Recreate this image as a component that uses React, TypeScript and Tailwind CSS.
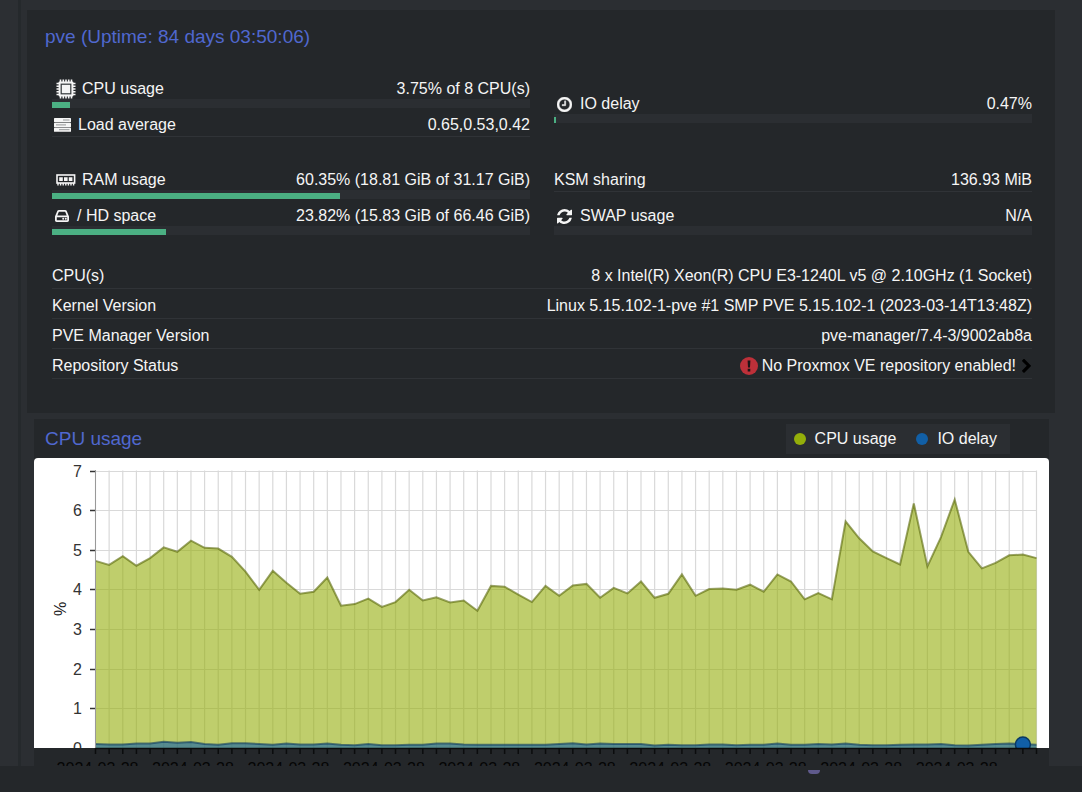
import type { ReactNode } from 'react';

const cpuSeries = [
  4.72, 4.62, 4.84, 4.6, 4.79, 5.06, 4.95, 5.23, 5.05, 5.03, 4.82, 4.45, 3.99, 4.47, 4.17, 3.89, 3.94, 4.3,
  3.59, 3.63, 3.77, 3.56, 3.68, 3.99, 3.72, 3.8, 3.67, 3.72, 3.46, 4.09, 4.07, 3.87, 3.68, 4.09, 3.84, 4.1,
  4.14, 3.79, 4.04, 3.9, 4.2, 3.79, 3.89, 4.38, 3.84, 4.01, 4.02, 3.99, 4.12, 3.94, 4.38, 4.2, 3.75, 3.91,
  3.75, 5.72, 5.29, 4.96, 4.79, 4.63, 6.17, 4.58, 5.32, 6.27, 4.95, 4.53, 4.67, 4.86, 4.88, 4.79,
];

const ioSeries = [
  0.1, 0.09, 0.09, 0.11, 0.11, 0.16, 0.13, 0.15, 0.1, 0.08, 0.12, 0.12, 0.1, 0.08, 0.11, 0.09, 0.09, 0.11,
  0.08, 0.07, 0.1, 0.07, 0.07, 0.08, 0.08, 0.11, 0.11, 0.09, 0.08, 0.08, 0.08, 0.08, 0.08, 0.08, 0.1, 0.12,
  0.09, 0.11, 0.1, 0.1, 0.1, 0.06, 0.08, 0.07, 0.07, 0.09, 0.09, 0.07, 0.08, 0.08, 0.11, 0.08, 0.08, 0.1,
  0.09, 0.11, 0.08, 0.07, 0.07, 0.08, 0.09, 0.09, 0.1, 0.07, 0.06, 0.08, 0.1, 0.11, 0.1, 0.08,
];

const dateLabels = Array.from({ length: 10 }, () => '2024-03-28');

const details = [
  { label: 'CPU(s)', value: '8 x Intel(R) Xeon(R) CPU E3-1240L v5 @ 2.10GHz (1 Socket)' },
  { label: 'Kernel Version', value: 'Linux 5.15.102-1-pve #1 SMP PVE 5.15.102-1 (2023-03-14T13:48Z)' },
  { label: 'PVE Manager Version', value: 'pve-manager/7.4-3/9002ab8a' },
];

function CpuIcon() {
  const pins = [4.5, 7.3, 10, 12.7, 15.5];
  return (
    <svg viewBox="0 0 20 20" className="ml-1 mr-1.5 h-5 w-5" aria-hidden="true">
      <g stroke="#f5f5f5" strokeWidth="1.6">
        {pins.map((p) => (
          <path key={p} d={`M${p} 0.5V19.5M0.5 ${p}H19.5`} />
        ))}
      </g>
      <rect x="2.6" y="2.6" width="14.8" height="14.8" rx="1" fill="#f5f5f5" />
      <rect x="5.2" y="5.2" width="9.6" height="9.6" fill="none" stroke="#33373a" strokeWidth="1.2" />
    </svg>
  );
}

function ServerIcon() {
  return (
    <svg viewBox="0 0 17 14" className="ml-0.5 mr-[7px] h-3.5 w-[17px]" aria-hidden="true">
      {[0, 4.8, 9.6] .map((y) => (
        <rect key={y} x="0" y={y} width="17" height="4.2" rx="0.6" fill="#f5f5f5" />
      ))}
      <path d="M9 2H15.5M2 6.9H12M5 11.7H15.5" stroke="#6b6e70" strokeWidth="0.7" />
    </svg>
  );
}

function RamIcon() {
  return (
    <svg viewBox="0 0 20 12" className="ml-1 mr-1.5 h-3 w-5" aria-hidden="true">
      <rect x="1" y="1" width="17.6" height="8" fill="none" stroke="#f5f5f5" strokeWidth="1.6" />
      <path d="M3.2 3.2h3.6v3.8h-3.6zM8 3.2h3.6v3.8h-3.6zM12.8 3.2h3.6v3.8h-3.6z" fill="#f5f5f5" />
      <path d="M2 9v2.4M4.6 9v2.4M7.2 9v2.4M9.8 9v2.4M12.4 9v2.4M15 9v2.4M17.6 9v2.4" stroke="#f5f5f5" strokeWidth="1.4" />
    </svg>
  );
}

function DiskIcon() {
  return (
    <svg viewBox="0 0 14 12" className="ml-[3px] mr-2 h-3 w-3.5" aria-hidden="true">
      <path d="M0.9 6.6 3 1.5Q3.3 0.9 4 0.9H10Q10.7 0.9 11 1.5L13.1 6.6V10.3Q13.1 11.1 12.3 11.1H1.7Q0.9 11.1 0.9 10.3ZM0.9 6.4H13.1" fill="none" stroke="#f5f5f5" strokeWidth="1.8" />
      <circle cx="8.2" cy="8.8" r="1" fill="#f5f5f5" />
      <circle cx="10.8" cy="8.8" r="1" fill="#f5f5f5" />
    </svg>
  );
}

function ClockIcon() {
  return (
    <svg viewBox="0 128 1536 1536" className="ml-[3px] mr-2 h-[15px] w-[15px]" fill="#f5f5f5" stroke="#f5f5f5" strokeWidth="40" aria-hidden="true">
      <path d="M896 544v448q0 14-9 23t-23 9h-320q-14 0-23-9t-9-23v-64q0-14 9-23t23-9h224v-352q0-14 9-23t23-9h64q14 0 23 9t9 23zm416 352q0-148-73-273t-198-198-273-73-273 73-198 198-73 273 73 273 198 198 273 73 273-73 198-198 73-273zm224 0q0 209-103 385.5t-279.5 279.5-385.5 103-385.5-103-279.5-279.5-103-385.5 103-385.5 279.5-279.5 385.5-103 385.5 103 279.5 279.5 103 385.5z" />
    </svg>
  );
}

function RefreshIcon() {
  return (
    <svg viewBox="128 128 1536 1536" className="ml-[3px] mr-2 h-[15px] w-[15px]" fill="#f5f5f5" aria-hidden="true">
      <path d="M1639 1056q0 5-1 7-64 268-268 434.5t-478 166.5q-146 0-282.5-55t-243.5-157l-129 129q-19 19-45 19t-45-19-19-45v-448q0-26 19-45t45-19h448q26 0 45 19t19 45-19 45l-137 137q71 66 161 102t187 36q134 0 250-65t186-179q11-17 53-117 8-23 30-23h192q13 0 22.5 9.5t9.5 22.5zm25-800v448q0 26-19 45t-45 19h-448q-26 0-45-19t-19-45 19-45l138-138q-148-137-349-137-134 0-250 65t-186 179q-11 17-53 117-8 23-30 23h-199q-13 0-22.5-9.5t-9.5-22.5v-7q65-268 270-434.5t480-166.5q146 0 284 55.5t245 156.5l130-129q19-19 45-19t45 19 19 45z" />
    </svg>
  );
}

function AlertIcon() {
  return (
    <svg viewBox="0 0 18 18" className="mr-1 h-[18px] w-[18px]" aria-hidden="true">
      <circle cx="9" cy="9" r="9" fill="#bd3039" />
      <path d="M7.6 3.4h2.8l-.4 7H8zM7.7 11.8h2.6v2.6H7.7z" fill="#1d1416" />
    </svg>
  );
}

function ChevronIcon() {
  return (
    <svg viewBox="346 64 1036 1574" className="ml-1.5 mr-px h-3.5 w-[9px]" aria-hidden="true">
      <path d="M1363 877l-742 742q-19 19-45 19t-45-19l-166-166q-19-19-19-45t19-45l531-531-531-531q-19-19-19-45t19-45l166-166q19-19 45-19t45 19l742 742q19 19 19 45t-19 45z" fill="#000" />
    </svg>
  );
}

interface UsageRowProps {
  icon?: ReactNode;
  label: string;
  value: string;
  percent?: number;
}

// percent left out means a plain row with a hairline instead of a bar
function UsageRow({ icon, label, value, percent }: UsageRowProps) {
  return (
    <div className="h-9">
      <div className="flex h-5 items-center justify-between">
        <span className="flex items-center">
          {icon}
          {label}
        </span>
        <span>{value}</span>
      </div>
      {percent === undefined ? (
        <div className="mt-px h-px bg-[#303337]" />
      ) : (
        <div className="flex h-[9px] items-end bg-[#2b2e32]">
          <div className="h-1.5 bg-[#4bb083]" style={{ width: `${percent}%` }} />
        </div>
      )}
    </div>
  );
}

const LEFT = 61.5;
const RIGHT = 1002.5;
const BASE = 290;
const UNIT = 39.64;
const STEP = (RIGHT - LEFT) / (cpuSeries.length - 1);

const toLine = (series: number[]) =>
  series.map((v, i) => `${(LEFT + i * STEP).toFixed(1)},${(BASE - v * UNIT).toFixed(1)}`).join(' ');

function UsageChart() {
  const cpu = toLine(cpuSeries);
  const io = toLine(ioSeries);
  return (
    <svg viewBox="0 0 1015 308" className="block w-full overflow-hidden" role="img" aria-label="CPU usage chart">
      <path d="M0 290V4Q0 0 4 0H1011Q1015 0 1015 4V290Z" fill="#fff" />

      <g stroke="#d9d9d9" strokeWidth="1.2">
        {cpuSeries.map((_, i) => (
          <line key={i} x1={LEFT + i * STEP} x2={LEFT + i * STEP} y1="12.5" y2={BASE} />
        ))}
        {[1, 2, 3, 4, 5, 6, 7].map((v) => (
          <line key={v} x1={LEFT} x2={RIGHT} y1={Math.round(BASE - v * UNIT) + 0.5} y2={Math.round(BASE - v * UNIT) + 0.5} />
        ))}
      </g>

      <polygon points={`${LEFT},${BASE} ${cpu} ${RIGHT},${BASE}`} fill="#94ae0a" fillOpacity="0.6" />
      <polyline points={cpu} fill="none" stroke="#566606" strokeOpacity="0.6" strokeWidth="2" />
      <polygon points={`${LEFT},${BASE} ${io} ${RIGHT},${BASE}`} fill="#115fa6" fillOpacity="0.6" />
      <polyline points={io} fill="none" stroke="#0a3861" strokeOpacity="0.6" strokeWidth="2" />
      <circle cx={RIGHT - STEP} cy="286.5" r="7.5" fill="#115fa6" stroke="#0a3861" strokeWidth="1.5" />

      <g fill="#333" fontSize="16" textAnchor="end">
        {[0, 1, 2, 3, 4, 5, 6, 7].map((v) => (
          <text key={v} x="48" y={Math.round(BASE - v * UNIT) + 6}>
            {v}
          </text>
        ))}
      </g>
      <text transform="translate(32 151) rotate(-90)" fontSize="16" textAnchor="middle" fill="#222">
        %
      </text>
      <g stroke="#333" strokeWidth="1.5">
        {[1, 2, 3, 4, 5, 6, 7].map((v) => (
          <line key={v} x1="56" x2="62" y1={Math.round(BASE - v * UNIT) + 0.5} y2={Math.round(BASE - v * UNIT) + 0.5} />
        ))}
        <line x1={LEFT} x2={LEFT} y1="12" y2={BASE} stroke="#999" strokeWidth="1" />
      </g>

      {/* everything under the zero line sits on the dark panel */}
      <rect x="0" y={BASE} width="1015" height="18" fill="#24272a" />
      <g stroke="#0b0c0d" strokeWidth="1.5">
        <line x1={LEFT} x2={RIGHT} y1={BASE + 0.5} y2={BASE + 0.5} />
        {cpuSeries.map((_, i) => (
          <line key={i} x1={LEFT + i * STEP} x2={LEFT + i * STEP} y1={BASE} y2={BASE + 6} />
        ))}
      </g>
      <g fill="#050505" fontSize="16" textAnchor="middle">
        {dateLabels.map((date, i) => (
          <text key={i} x={63.5 + i * STEP * 7} y="316">
            {date}
          </text>
        ))}
      </g>
    </svg>
  );
}

export default function App() {
  return (
    <div className="min-h-screen bg-[#24272a] font-['Liberation_Sans',Arial,sans-serif] text-base leading-5 text-[#f5f5f5]">
      <div className="flex">
        <div className="w-[18px] bg-[#2c2f33]" />
        <div className="w-[3px] bg-[#25292c]" />
        <main className="min-w-0 flex-1 bg-[#2b2e32] pl-1.5 pr-[27px] pt-2.5">
          <section className="bg-[#24272a] pb-[34px] pl-[25px] pr-[23px] pt-[17px]">
            <h1 className="-ml-[7px] text-[19px] leading-5 text-[#5068cf]">pve (Uptime: 84 days 03:50:06)</h1>

            <div className="mt-8 grid grid-cols-2 gap-x-6 gap-y-[19px]">
              <div>
                <UsageRow icon={<CpuIcon />} label="CPU usage" value="3.75% of 8 CPU(s)" percent={3.75} />
                <UsageRow icon={<ServerIcon />} label="Load average" value="0.65,0.53,0.42" />
              </div>
              <div className="pt-[15px]">
                <UsageRow icon={<ClockIcon />} label="IO delay" value="0.47%" percent={0.47} />
              </div>
              <div>
                <UsageRow icon={<RamIcon />} label="RAM usage" value="60.35% (18.81 GiB of 31.17 GiB)" percent={60.35} />
                <UsageRow icon={<DiskIcon />} label="/ HD space" value="23.82% (15.83 GiB of 66.46 GiB)" percent={23.82} />
              </div>
              <div>
                <UsageRow label="KSM sharing" value="136.93 MiB" />
                <UsageRow icon={<RefreshIcon />} label="SWAP usage" value="N/A" percent={0} />
              </div>
            </div>

            <dl className="mt-6">
              {details.map((row) => (
                <div key={row.label} className="mb-[7px] flex justify-between border-b border-[#303337] pb-0.5">
                  <dt>{row.label}</dt>
                  <dd>{row.value}</dd>
                </div>
              ))}
              <div className="flex justify-between border-b border-[#303337] pb-0.5">
                <dt>Repository Status</dt>
                <dd>
                  <button type="button" className="flex h-5 items-center">
                    <AlertIcon />
                    No Proxmox VE repository enabled!
                    <ChevronIcon />
                  </button>
                </dd>
              </div>
            </dl>
          </section>

          <section className="ml-[7px] mr-1.5 mt-1.5 bg-[#24272a]">
            <header className="flex h-[39px] items-center justify-between pl-[11px] pr-[39px]">
              <h2 className="text-[19px] leading-5 text-[#5068cf]">CPU usage</h2>
              <div className="flex h-[30px] items-center gap-5 bg-[#2b2e32] pl-2 pr-[13px]">
                <button type="button" className="flex items-center gap-[9px]">
                  <span className="h-3 w-3 rounded-full bg-[#94ae0a]" />
                  CPU usage
                </button>
                <button type="button" className="flex items-center gap-[9px]">
                  <span className="h-3 w-3 rounded-full bg-[#115fa6]" />
                  IO delay
                </button>
              </div>
            </header>
            <UsageChart />
          </section>
        </main>
      </div>
      <footer className="flex w-[76%] justify-end pr-0.5 pt-1">
        <div className="h-1 w-3 rounded-b-full bg-[#5f5a8c]" />
      </footer>
    </div>
  );
}
